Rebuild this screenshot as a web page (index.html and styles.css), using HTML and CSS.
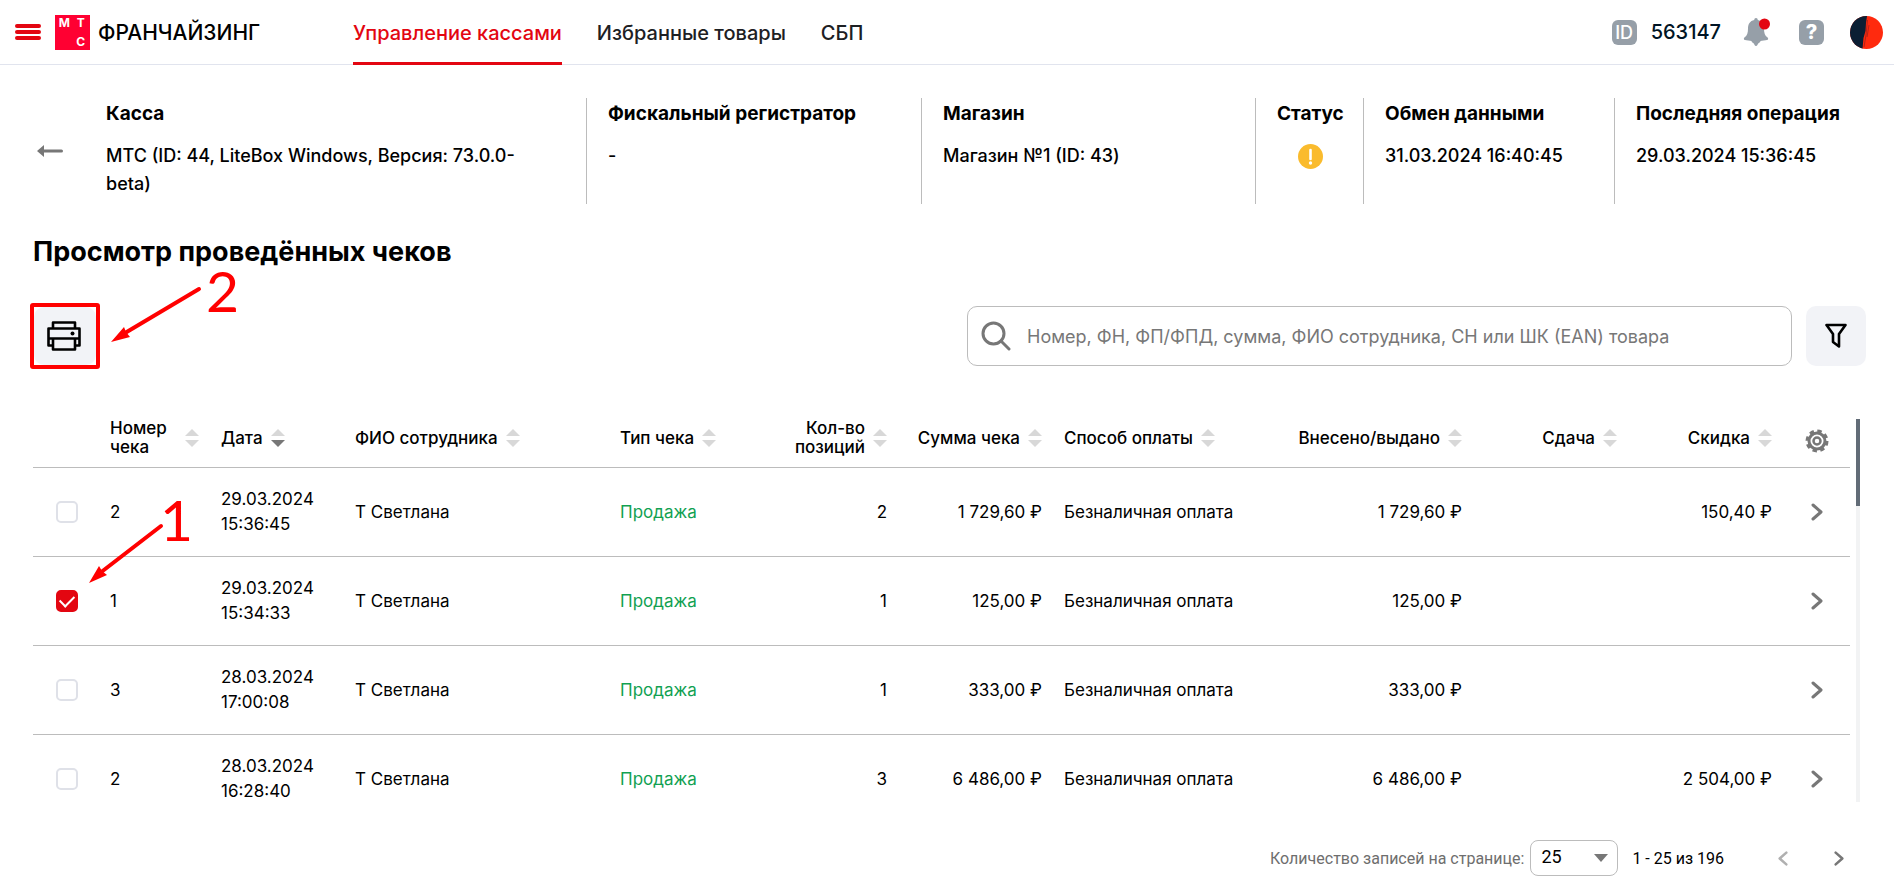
FILE: index.html
```
<!DOCTYPE html>
<html lang="ru">
<head>
<meta charset="utf-8">
<meta name="viewport" content="width=device-width, initial-scale=1">
<title>Управление кассами</title>
<link rel="stylesheet" href="styles.css">
</head>
<body>
<svg class="sprite" aria-hidden="true">
  <symbol id="sort" viewBox="0 0 14 18"><path class="sort-up" d="M7 0l7 7H0z"/><path class="sort-down" d="M7 18l7-7H0z"/></symbol>
  <symbol id="chevron" viewBox="0 0 12 18"><path d="M2 2l8 7-8 7" fill="none" stroke="currentColor" stroke-width="3" stroke-linecap="round" stroke-linejoin="round"/></symbol>
</svg>

<header class="topbar">
  <button class="burger" aria-label="Меню"><i></i><i></i><i></i></button>
  <a class="brand" href="#">
    <span class="logo"><b>М</b><b>Т</b><b class="logo-last">С</b></span>
    <span class="brand-name">ФРАНЧАЙЗИНГ</span>
  </a>
  <nav class="nav">
    <a class="nav-link active" href="#">Управление кассами</a>
    <a class="nav-link" href="#">Избранные товары</a>
    <a class="nav-link" href="#">СБП</a>
  </nav>
  <div class="account">
    <span class="badge badge-id">ID</span>
    <span class="account-id">563147</span>
    <button class="bell" aria-label="Уведомления">
      <svg width="28" height="30" viewBox="0 0 28 30"><path fill="#969fa8" d="M13 1c1.100 0 1.700.9 1.800 2 4.200.9 6.200 4 6.200 8.500 0 4.500.8 7 3.600 9 .9.700.700 2.500-.600 2.500-1.500.3-5 .8-6.400 1-.3 1.200-1.600 1.700-2.400 2.500-.600.8-.800 2.500-2.200 2.500s-1.600-1.700-2.200-2.500c-.8-.8-2.100-1.300-2.400-2.500-1.400-.2-4.900-.7-6.400-1-1.300 0-1.500-1.800-.6-2.500C4.200 18.500 5 16 5 11.500 5 7 7 3.900 11.200 3c.1-1.100.7-2 1.800-2z"/><circle cx="21.500" cy="7" r="5.500" fill="#e30611"/></svg>
    </button>
    <button class="badge" aria-label="Помощь">?</button>
    <button class="avatar" aria-label="Профиль">
      <svg width="33" height="33" viewBox="0 0 33 33"><defs><clipPath id="round"><circle cx="16.500" cy="16.500" r="16.500"/></clipPath></defs><g clip-path="url(#round)"><path fill="#ff2a0e" d="M0 0h33v33H0z"/><path fill="#0b1e33" d="M0 0h17l-1 7-.5 8-2 7-1 11H0z"/><path d="M17.500 4l-1.500 15-2 12M19 9l-2 12" fill="none" stroke="#a3221a" stroke-width=".8"/></g></svg>
    </button>
  </div>
</header>

<main class="page">
  <section class="info">
    <button class="back" aria-label="Назад"><svg width="26" height="12" viewBox="0 0 26 12"><path d="M0 6l7-6v4.500h17.500a1.500 1.500 0 0 1 0 3H7V12z" fill="#777"/></svg></button>
    <dl class="info-item"><dt>Касса</dt><dd>МТС (ID: 44, LiteBox Windows, Версия: 73.0.0-beta)</dd></dl>
    <dl class="info-item"><dt>Фискальный регистратор</dt><dd>-</dd></dl>
    <dl class="info-item"><dt>Магазин</dt><dd>Магазин №1 (ID: 43)</dd></dl>
    <dl class="info-item status"><dt>Статус</dt><dd><svg width="25" height="25" viewBox="0 0 25 25" role="img" aria-label="Предупреждение"><circle cx="12.500" cy="12.500" r="12.500" fill="#fabb2d"/><path d="M12.500 6v9" stroke="#fff" stroke-width="2.600" stroke-linecap="round"/><circle cx="12.500" cy="19" r="1.700" fill="#fff"/></svg></dd></dl>
    <dl class="info-item"><dt>Обмен данными</dt><dd>31.03.2024 16:40:45</dd></dl>
    <dl class="info-item"><dt>Последняя операция</dt><dd>29.03.2024 15:36:45</dd></dl>
  </section>

  <h1 class="title">Просмотр проведённых чеков</h1>

  <div class="tools">
    <div class="print-wrap">
      <button class="square print" aria-label="Печать">
        <svg width="34" height="30" viewBox="0 0 34 30" fill="none" stroke="#000" stroke-width="2.600" stroke-linejoin="round"><path d="M6 7V1.500h22V7M6 24.500H1.500V7.500h31v17H28M2 17.500h30"/><path d="M6 18v10.500h22V18"/><circle cx="25.500" cy="12.500" r="2" fill="#000" stroke="none"/></svg>
      </button>
      <div class="mark mark-print" aria-hidden="true">
        <svg width="92" height="58" viewBox="0 0 92 58"><path d="M89 3L15 47" stroke="#f00" stroke-width="4" stroke-linecap="round"/><path d="M1 56l13-15 2 5 4 5z" fill="#f00"/></svg>
        <span>2</span>
      </div>
    </div>
    <label class="search">
      <svg width="30" height="30" viewBox="0 0 30 30" fill="none" stroke="#777" stroke-width="3" stroke-linecap="round"><circle cx="12.500" cy="12.500" r="10.500"/><path d="M20 20l8 8"/></svg>
      <input type="text" aria-label="Поиск" placeholder="Номер, ФН, ФП/ФПД, сумма, ФИО сотрудника, СН или ШК (EAN) товара">
    </label>
    <button class="square" aria-label="Фильтр"><svg width="22" height="26" viewBox="0 0 22 26"><path d="M1.500 2h19L14 11v12.500L8 19v-8z" fill="none" stroke="#000" stroke-width="2.600" stroke-linejoin="round"/></svg></button>
  </div>

  <div class="grid">
    <div class="grid-view">
      <table class="receipts">
        <colgroup><col class="c-check"><col class="c-num"><col class="c-date"><col class="c-name"><col class="c-type"><col class="c-qty"><col class="c-sum"><col class="c-pay"><col class="c-paid"><col class="c-change"><col class="c-disc"><col class="c-more"></colgroup>
        <thead>
          <tr>
            <th></th>
            <th><div class="th th-spread">Номер<br>чека<svg><use href="#sort"/></svg></div></th>
            <th><div class="th sorted">Дата<svg><use href="#sort"/></svg></div></th>
            <th><div class="th">ФИО сотрудника<svg><use href="#sort"/></svg></div></th>
            <th><div class="th">Тип чека<svg><use href="#sort"/></svg></div></th>
            <th><div class="th th-end"><span>Кол-во<br>позиций</span><svg><use href="#sort"/></svg></div></th>
            <th><div class="th th-end">Сумма чека<svg><use href="#sort"/></svg></div></th>
            <th><div class="th">Способ оплаты<svg><use href="#sort"/></svg></div></th>
            <th><div class="th th-end">Внесено/выдано<svg><use href="#sort"/></svg></div></th>
            <th><div class="th th-end">Сдача<svg><use href="#sort"/></svg></div></th>
            <th><div class="th th-end">Скидка<svg><use href="#sort"/></svg></div></th>
            <th class="more"><button class="gear" aria-label="Настройки"><svg width="24" height="24" viewBox="0 0 24 24" fill="none" stroke="#777"><circle cx="12" cy="12" r="8" stroke-width="3"/><circle cx="12" cy="12" r="3.500" stroke-width="2.500"/><circle cx="12" cy="12" r="10" stroke-width="3" stroke-dasharray="4.400 3.454"/></svg></button></th>
          </tr>
        </thead>
        <tbody>
          <tr>
            <td class="pick"><input type="checkbox" aria-label="Чек 2, 29.03.2024"></td>
            <td>2</td><td>29.03.2024 15:36:45</td><td>Т Светлана</td><td class="sale">Продажа</td><td class="n">2</td><td class="n">1 729,60 ₽</td><td>Безналичная оплата</td><td class="n">1 729,60 ₽</td><td></td><td class="n">150,40 ₽</td>
            <td class="more"><button aria-label="Открыть"><svg width="12" height="18"><use href="#chevron"/></svg></button></td>
          </tr>
          <tr>
            <td class="pick"><input type="checkbox" checked aria-label="Чек 1, 29.03.2024">
              <div class="mark mark-check" aria-hidden="true">
                <svg width="78" height="62" viewBox="0 0 78 62"><path d="M73 3L12 50" stroke="#f00" stroke-width="4" stroke-linecap="round"/><path d="M1 60l10-17 3 5 5 4z" fill="#f00"/></svg>
                <span>1</span>
              </div>
            </td>
            <td>1</td><td>29.03.2024 15:34:33</td><td>Т Светлана</td><td class="sale">Продажа</td><td class="n">1</td><td class="n">125,00 ₽</td><td>Безналичная оплата</td><td class="n">125,00 ₽</td><td></td><td></td>
            <td class="more"><button aria-label="Открыть"><svg width="12" height="18"><use href="#chevron"/></svg></button></td>
          </tr>
          <tr>
            <td class="pick"><input type="checkbox" aria-label="Чек 3, 28.03.2024"></td>
            <td>3</td><td>28.03.2024 17:00:08</td><td>Т Светлана</td><td class="sale">Продажа</td><td class="n">1</td><td class="n">333,00 ₽</td><td>Безналичная оплата</td><td class="n">333,00 ₽</td><td></td><td></td>
            <td class="more"><button aria-label="Открыть"><svg width="12" height="18"><use href="#chevron"/></svg></button></td>
          </tr>
          <tr>
            <td class="pick"><input type="checkbox" aria-label="Чек 2, 28.03.2024"></td>
            <td>2</td><td>28.03.2024 16:28:40</td><td>Т Светлана</td><td class="sale">Продажа</td><td class="n">3</td><td class="n">6 486,00 ₽</td><td>Безналичная оплата</td><td class="n">6 486,00 ₽</td><td></td><td class="n">2 504,00 ₽</td>
            <td class="more"><button aria-label="Открыть"><svg width="12" height="18"><use href="#chevron"/></svg></button></td>
          </tr>
        </tbody>
      </table>
    </div>
    <div class="scroll"><div class="scroll-thumb"></div></div>
  </div>

  <footer class="pager">
    <label class="pager-label" for="size">Количество записей на странице:</label>
    <span class="size-box"><select id="size"><option>25</option><option>50</option><option>100</option></select></span>
    <span class="range">1 - 25 из 196</span>
    <button class="prev" aria-label="Назад" disabled><svg width="10" height="15"><use href="#chevron"/></svg></button>
    <button class="next" aria-label="Вперёд"><svg width="10" height="15"><use href="#chevron"/></svg></button>
  </footer>
</main>
</body>
</html>
```
FILE: styles.css
```
* { box-sizing: border-box; }
body {
  margin: 0;
  height: 100vh;
  display: flex;
  flex-direction: column;
  overflow: hidden;
  background: #fff;
  color: #000;
  font-family: Inter, "Liberation Sans", sans-serif;
  font-size: 17px;
}
button { border: 0; padding: 0; background: none; font: inherit; cursor: pointer; }
svg { display: block; flex: none; }
a { color: inherit; text-decoration: none; }
.sprite { position: absolute; width: 0; height: 0; }

.topbar { display: flex; align-items: center; flex: none; height: 65px; padding: 0 11px 0 15px; border-bottom: 1px solid #e1e4ee; }
.burger { display: grid; gap: 2px; width: 26px; }
.burger i { height: 4px; border-radius: 2px; background: #e30611; }
.brand { display: flex; align-items: center; gap: 8px; margin-left: 14px; width: 298px; }
.logo { display: grid; grid-template-columns: 1fr 1fr; align-content: space-between; justify-items: center; width: 35px; height: 35px; padding: 2px 1px; background: #ff0032; color: #fff; font-size: 12px; line-height: 12px; }
.logo-last { grid-column: 2; }
.brand-name { font-size: 21px; font-weight: 500; }
.nav { display: flex; gap: 35px; align-self: stretch; margin-bottom: -1px; font-size: 20px; font-weight: 500; color: #1d2023; }
.nav-link { display: flex; align-items: center; border-bottom: 3px solid transparent; border-top: 3px solid transparent; }
.nav-link.active { color: #e30611; border-bottom-color: #e30611; }
.account { display: flex; align-items: center; margin-left: auto; }
.badge { display: grid; place-items: center; width: 25px; height: 25px; border-radius: 6px; background: #969fa8; color: #fff; font-size: 20px; font-weight: 800; line-height: 25px; }
.badge-id { font-size: 18px; font-weight: 500; }
.account-id { margin: 0 22px 0 14px; font-size: 20px; font-weight: 500; color: #001424; }
.bell { margin-right: 28px; }
.avatar { margin-left: 26px; }

.page { flex: 1; min-height: 0; display: flex; flex-direction: column; padding: 33px 28px 11px 33px; }
.info { display: grid; grid-template-columns: 52px 501fr 335fr 334fr 108px 251px 252px; flex: none; min-height: 106px; font-size: 18px; }
.back { align-self: center; padding-left: 4px; }
.info-item { margin: 0; padding: 2px 20px 2px 21px; border-left: 1px solid #bcbcbc; line-height: 28px; }
.back + .info-item { border-left: 0; padding-right: 40px; }
.info-item dt { font-size: 19px; font-weight: 700; margin-bottom: 14px; white-space: nowrap; }
.info-item dd { margin: 0; font-weight: 500; }
.status dd { display: grid; justify-content: center; padding-top: 2px; }

.title { flex: none; margin: 32px 0 0; font-size: 27px; line-height: 32px; font-weight: 700; }
.tools { display: flex; align-items: center; gap: 14px; flex: none; margin-top: 37px; height: 62px; }
.square { display: grid; place-items: center; width: 60px; height: 60px; border-radius: 10px; background: #f2f3f7; }
.print-wrap { position: relative; margin: 0 auto 0 -3px; border: 4px solid #f00; border-radius: 3px; }
.print { width: 62px; height: 58px; padding-right: 3px; }
.mark { position: absolute; display: flex; gap: 4px; color: #f00; font: 57px/42px Lato, sans-serif; pointer-events: none; }
.mark-print { left: 76px; top: -21px; }
.mark-print span { margin-top: -17px; }
.search { display: flex; align-items: center; gap: 16px; width: 825px; height: 60px; padding: 0 13px; border: 1px solid #bcbcbc; border-radius: 10px; }
.search input { flex: 1; min-width: 0; border: 0; outline: 0; padding: 0; font: inherit; font-size: 18px; }
.search input::placeholder { color: #777; opacity: 1; }

.grid { flex: 1; min-height: 0; display: flex; gap: 6px; margin-top: 52px; }
.grid-view { flex: 1; overflow: hidden; }
.scroll { width: 4px; margin-right: 6px; background: #f2f3f4; }
.scroll-thumb { height: 87px; background: #626c77; }
.receipts { width: 100%; table-layout: fixed; border-collapse: collapse; }
.c-check { width: 66px; } .c-num { width: 111px; } .c-date { width: 134px; } .c-name { width: 265px; }
.c-type { width: 150px; } .c-qty { width: 139px; } .c-sum { width: 155px; } .c-pay { width: 220px; }
.c-paid { width: 200px; } .c-change { width: 155px; } .c-disc { width: 155px; } .c-more { width: 67px; }
.receipts th, .receipts td { padding: 0 11px; border-bottom: 1px solid #bcbcbc; text-align: left; }
.receipts th { height: 48px; padding-bottom: 10px; font-weight: 500; line-height: 19px; }
.receipts td { height: 89px; line-height: 25px; }
.th { display: flex; align-items: center; gap: 8px; white-space: nowrap; }
.th svg { width: 14px; height: 18px; }
.th-spread { justify-content: space-between; }
.th-end { justify-content: flex-end; text-align: right; }
.sort-up { fill: #d8d8d8; }
.sort-down { fill: var(--down, #d8d8d8); }
.sorted { --down: #777; }
.receipts .n { text-align: right; white-space: nowrap; }
.sale { color: #12a152; }
.receipts .pick { position: relative; padding-left: 23px; }
.pick input { appearance: none; display: block; width: 22px; height: 22px; margin: 0; border: 2px solid #dfe1e8; border-radius: 5px; }
.pick input:checked { display: grid; place-items: center; border-color: #e30611; background: #e30611; }
.pick input:checked::after { content: ""; width: 12px; height: 7px; margin-top: -3px; border: solid #fff; border-width: 0 0 2px 2px; transform: rotate(-45deg); }
.mark-check { left: 55px; top: -34px; gap: 0; }
.mark-check svg { margin-right: -6px; }
.mark-check span { margin-top: -25px; }
.receipts .more { padding: 0; color: #777; }
.receipts th.more { padding-bottom: 4px; }
.more button { display: block; margin: 0 auto; color: #777; }

.pager { display: flex; align-items: center; justify-content: flex-end; flex: none; margin-top: 38px; padding-right: 22px; height: 36px; font-family: Roboto, "Liberation Sans", sans-serif; font-size: 16px; }
.pager-label { color: #6e6e6e; margin-right: 6px; }
.size-box { position: relative; }
.size-box::after { content: ""; position: absolute; right: 10px; top: 14px; border: 7px solid transparent; border-top: 8px solid #777; border-bottom: 0; pointer-events: none; }
.size-box select { appearance: none; display: block; width: 88px; height: 36px; padding: 0 10px 3px; border: 1px solid #bcbcbc; border-radius: 8px; background: #fff; font: inherit; font-size: 18px; }
.range { margin: 0 54px 0 14px; }
.pager button { color: #777; }
.prev { transform: scaleX(-1); margin-right: 46px; }
.pager .prev { color: #b0b0b0; }
```
